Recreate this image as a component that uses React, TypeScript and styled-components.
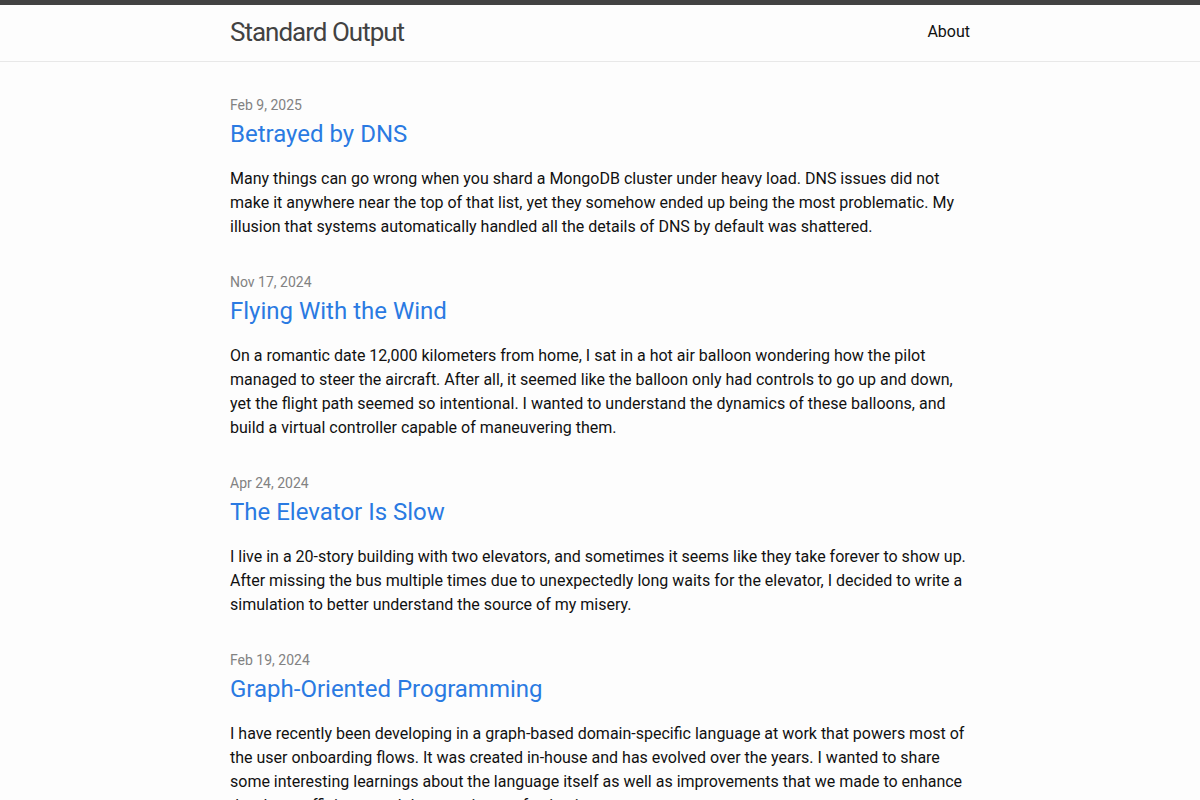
import React from "react";
import styled, { createGlobalStyle } from "styled-components";

const Global = createGlobalStyle`
  html, body { margin: 0; padding: 0; }
  body {
    background: #fdfdfd;
    color: #111111;
    font-family: Roboto, "Noto Sans", sans-serif;
    font-size: 16px;
    line-height: 1.5;
    font-weight: 400;
  }
`;

const Header = styled.header`
  border-top: 5px solid #424242;
  border-bottom: 1px solid #e8e8e8;
  min-height: 55.95px;
`;

const Wrapper = styled.div`
  max-width: 740px;
  margin: 0 auto;
`;

const HeaderRow = styled(Wrapper)`
  display: flex;
  justify-content: space-between;
  align-items: center;
`;

const SiteTitle = styled.a`
  font-size: 26px;
  font-weight: 400;
  line-height: 54px;
  letter-spacing: -1px;
  color: #424242;
  text-decoration: none;
`;

const NavLink = styled.a`
  color: #111111;
  line-height: 54px;
  font-size: 16px;
  text-decoration: none;
`;

const Main = styled.main`
  padding: 33px 0 30px;
`;

const PostList = styled.ul`
  list-style: none;
  margin: 0;
  padding: 0;
  display: flex;
  flex-direction: column;
  gap: 33px;
`;

const PostItem = styled.li`
  margin: 0;
`;

const Meta = styled.span`
  display: block;
  font-size: 14px;
  line-height: 21px;
  color: #828282;
`;

const PostTitle = styled.h3`
  margin: 0 0 15px;
  font-size: 24px;
  font-weight: 400;
  line-height: 36px;
`;

const PostLink = styled.a`
  color: #2a7ae2;
  text-decoration: none;
`;

const Excerpt = styled.p`
  margin: 0;
`;

const posts = [
  {
    date: "Feb 9, 2025",
    title: "Betrayed by DNS",
    excerpt:
      "Many things can go wrong when you shard a MongoDB cluster under heavy load. DNS issues did not make it anywhere near the top of that list, yet they somehow ended up being the most problematic. My illusion that systems automatically handled all the details of DNS by default was shattered.",
  },
  {
    date: "Nov 17, 2024",
    title: "Flying With the Wind",
    excerpt:
      "On a romantic date 12,000 kilometers from home, I sat in a hot air balloon wondering how the pilot managed to steer the aircraft. After all, it seemed like the balloon only had controls to go up and down, yet the flight path seemed so intentional. I wanted to understand the dynamics of these balloons, and build a virtual controller capable of maneuvering them.",
  },
  {
    date: "Apr 24, 2024",
    title: "The Elevator Is Slow",
    excerpt:
      "I live in a 20-story building with two elevators, and sometimes it seems like they take forever to show up. After missing the bus multiple times due to unexpectedly long waits for the elevator, I decided to write a simulation to better understand the source of my misery.",
  },
  {
    date: "Feb 19, 2024",
    title: "Graph-Oriented Programming",
    excerpt:
      "I have recently been developing in a graph-based domain-specific language at work that powers most of the user onboarding flows. It was created in-house and has evolved over the years. I wanted to share some interesting learnings about the language itself as well as improvements that we made to enhance developer efficiency and the experience of using it.",
  },
];

export default function App() {
  return (
    <>
      <Global />
      <Header>
        <HeaderRow>
          <SiteTitle href="#">Standard Output</SiteTitle>
          <NavLink href="#">About</NavLink>
        </HeaderRow>
      </Header>
      <Main>
        <Wrapper>
          <PostList>
            {posts.map((p) => (
              <PostItem key={p.title}>
                <Meta>{p.date}</Meta>
                <PostTitle>
                  <PostLink href="#">{p.title}</PostLink>
                </PostTitle>
                <Excerpt>{p.excerpt}</Excerpt>
              </PostItem>
            ))}
          </PostList>
        </Wrapper>
      </Main>
    </>
  );
}
